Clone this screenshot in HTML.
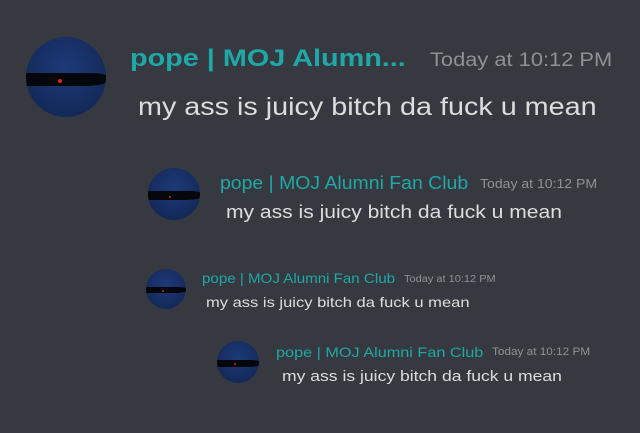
<!DOCTYPE html>
<html><head><style>
body{margin:0;width:640px;height:433px;background:#36393f;position:relative;overflow:hidden;font-family:"Liberation Sans",sans-serif}
.a{position:absolute;border-radius:50%;background:radial-gradient(circle at 50% 40%,#1d3a78,#10234f);overflow:hidden}
.a i{position:absolute;left:0;width:100%;background:#05070d;top:45%;height:16%;border-radius:0 20% 30% 0}
.a b{position:absolute;background:#e02020;border-radius:50%;width:5%;height:5%;left:40%;top:53%}
.t{position:absolute;white-space:nowrap;line-height:1;transform-origin:0 50%}
.n{color:#1fa8a8}
.n.bold{font-weight:bold}
.s{color:#8e9297}
.m{color:#dcddde}
</style></head><body>
<div class="a" style="left:26px;top:37px;width:80px;height:80px"><i></i><b></b></div>
<div class="t n bold" style="left:130px;top:47px;font-size:24px;transform:scaleX(1.2)">pope | MOJ Alumn...</div>
<div class="t s" style="left:430px;top:51px;font-size:19px;transform:scaleX(1.15)">Today at 10:12 PM</div>
<div class="t m" style="left:138px;top:95px;font-size:25px;transform:scaleX(1.15)">my ass is juicy bitch da fuck u mean</div>

<div class="a" style="left:148px;top:168px;width:52px;height:52px"><i></i><b></b></div>
<div class="t n" style="left:220px;top:174px;font-size:18px;transform:scaleX(1.08)">pope | MOJ Alumni Fan Club</div>
<div class="t s" style="left:480px;top:177px;font-size:13px;transform:scaleX(1.08)">Today at 10:12 PM</div>
<div class="t m" style="left:226px;top:203px;font-size:18px;transform:scaleX(1.17)">my ass is juicy bitch da fuck u mean</div>

<div class="a" style="left:146px;top:269px;width:40px;height:40px"><i></i><b></b></div>
<div class="t n" style="left:202px;top:271px;font-size:14px;transform:scaleX(1.08)">pope | MOJ Alumni Fan Club</div>
<div class="t s" style="left:404px;top:275px;font-size:10px;transform:scaleX(1.1)">Today at 10:12 PM</div>
<div class="t m" style="left:206px;top:295px;font-size:14px;transform:scaleX(1.18)">my ass is juicy bitch da fuck u mean</div>

<div class="a" style="left:217px;top:341px;width:42px;height:42px"><i></i><b></b></div>
<div class="t n" style="left:276px;top:345px;font-size:14px;transform:scaleX(1.16)">pope | MOJ Alumni Fan Club</div>
<div class="t s" style="left:492px;top:347px;font-size:11px;transform:scaleX(1.07)">Today at 10:12 PM</div>
<div class="t m" style="left:282px;top:369px;font-size:15px;transform:scaleX(1.17)">my ass is juicy bitch da fuck u mean</div>
</body></html>
